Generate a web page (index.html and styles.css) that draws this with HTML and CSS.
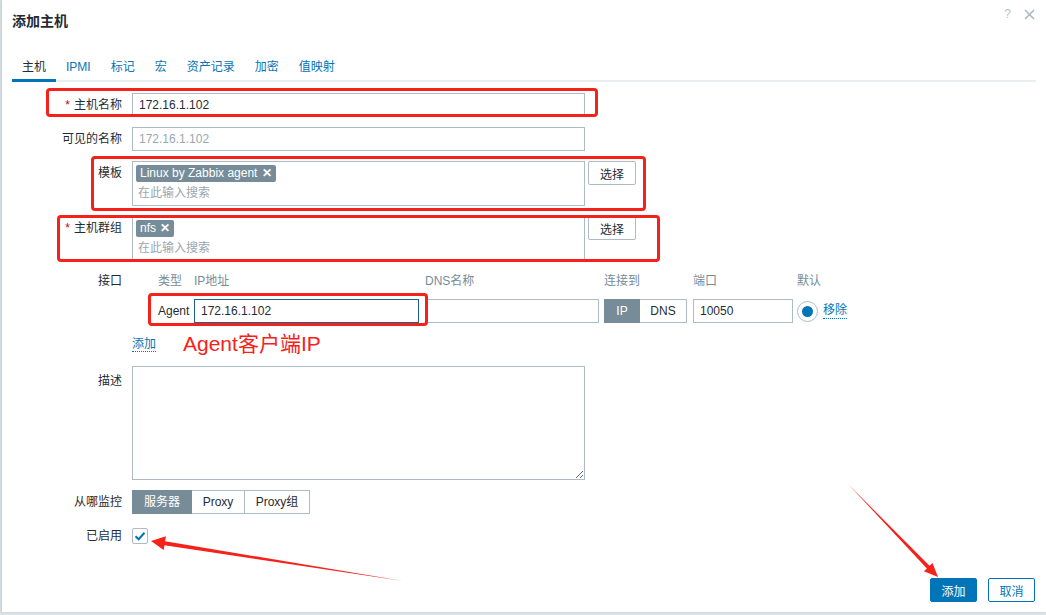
FILE: index.html
```html
<!DOCTYPE html>
<html>
<head>
    <meta charset="utf-8">
    <title>添加主机</title>
    <link rel="stylesheet" href="styles.css">
</head>
<body>
    <div class="dialog">
        <div class="dialog-head">
            <h4 class="dialog-title">添加主机</h4>
            <div class="head-icons">
                <span class="help">?</span>
                <svg class="close" width="11" height="11" viewBox="0 0 11 11"><path d="M1 1L10 10M10 1L1 10" stroke="#a9b8c3" stroke-width="1.6"/></svg>
            </div>
        </div>

        <ul class="tabs">
            <li class="active">主机</li>
            <li>IPMI</li>
            <li>标记</li>
            <li>宏</li>
            <li>资产记录</li>
            <li>加密</li>
            <li>值映射</li>
        </ul>

        <div class="form">
            <label class="lbl req">主机名称</label>
            <div class="field"><input class="text wide" type="text" value="172.16.1.102"></div>

            <label class="lbl">可见的名称</label>
            <div class="field"><input class="text wide" type="text" placeholder="172.16.1.102"></div>

            <label class="lbl">模板</label>
            <div class="field">
                <div class="ms">
                    <span class="tag">Linux by Zabbix agent <b>✕</b></span>
                    <div class="ms-hint">在此输入搜索</div>
                </div>
                <button class="btn pick">选择</button>
            </div>

            <label class="lbl req">主机群组</label>
            <div class="field">
                <div class="ms">
                    <span class="tag">nfs <b>✕</b></span>
                    <div class="ms-hint">在此输入搜索</div>
                </div>
                <button class="btn pick">选择</button>
            </div>

            <label class="lbl short">接口</label>
            <div class="iface">
                <div class="iface-grid head">
                    <span>类型</span>
                    <span>IP地址</span>
                    <span>DNS名称</span>
                    <span>连接到</span>
                    <span>端口</span>
                    <span>默认</span>
                </div>
                <div class="iface-grid data">
                    <span class="type">Agent</span>
                    <span><input class="text ip focus" type="text" value="172.16.1.102"></span>
                    <span><input class="text dns" type="text"></span>
                    <span class="seg">
                        <span class="seg-btn on">IP</span><span class="seg-btn">DNS</span>
                    </span>
                    <span><input class="text port" type="text" value="10050"></span>
                    <span class="def">
                        <span class="radio"><span class="dot"></span></span>
                        <a class="link">移除</a>
                    </span>
                </div>
                <div class="iface-add"><a class="link">添加</a></div>
            </div>

            <label class="lbl low">描述</label>
            <div class="field"><textarea class="area"></textarea></div>

            <label class="lbl">从哪监控</label>
            <div class="field">
                <span class="seg mon">
                    <span class="seg-btn on w1">服务器</span><span class="seg-btn w2">Proxy</span><span class="seg-btn w3">Proxy组</span>
                </span>
            </div>

            <label class="lbl">已启用</label>
            <div class="field">
                <span class="check">
                    <svg width="12" height="10" viewBox="0 0 12 10"><path d="M1.5 5.2L4.6 8.2L10.5 1.8" fill="none" stroke="#0275b8" stroke-width="2"/></svg>
                </span>
            </div>
        </div>

        <div class="dialog-foot">
            <button class="btn primary">添加</button>
            <button class="btn alt">取消</button>
        </div>
    </div>

    <!-- annotations drawn on top of the screenshot -->
    <div class="redbox box-name"></div>
    <div class="redbox box-tpl"></div>
    <div class="redbox box-grp"></div>
    <div class="redbox box-ip"></div>
    <div class="note">Agent客户端IP</div>
    <svg class="arrows" width="1046" height="615" viewBox="0 0 1046 615">
        <polygon fill="#f4221b" points="403,581 164.5,545.2 163.7,550.1 151,541 165.9,536.3 165.1,541.2"/>
        <polygon fill="#f4221b" points="848,484 929.5,565.8 932.5,562.9 938,577 923.9,571.3 926.9,568.4"/>
    </svg>
</body>
</html>
```

FILE: styles.css
```css
body { margin: 0; background: #dde3e6; font-family: "Liberation Sans", Arial, "Noto Sans CJK SC", sans-serif; font-size: 12px; color: #1f2c33; position: relative; width: 1046px; height: 615px; overflow: hidden; }
.dialog { margin-left: 2px; width: 1044px; height: 612px; background: #fff; display: flex; flex-direction: column; box-shadow: -1px 0 2px rgba(0,0,0,0.12); }

.dialog-head { height: 40px; padding: 0 10px; display: flex; align-items: center; justify-content: space-between; }
.dialog-title { margin: 0; font-size: 14px; font-weight: bold; color: #1f2c33; }
.head-icons { align-self: flex-start; margin-top: 7px; display: flex; align-items: center; gap: 13px; margin-right: 1px; }
.help { color: #b7c2ca; font-size: 12px; }

.tabs { list-style: none; margin: 0 10px; padding: 0; display: flex; border-bottom: 2px solid #ebeef0; }
.tabs li { padding: 19px 10px 4px; line-height: 16px; color: #0275b8; border-bottom: 3px solid transparent; margin-bottom: -2px; }
.tabs li.active { color: #1f2c33; border-bottom-color: #0275b8; }

.form { display: grid; grid-template-columns: 110px 1fr; column-gap: 10px; row-gap: 10px; padding: 11px 10px 0; }
.lbl { text-align: right; line-height: 24px; }
.lbl.short { line-height: 18px; padding-top: 1px; }
.lbl.low { padding-top: 3px; }
.req::before { content: "*"; color: #d40000; margin-right: 4px; }
.field { display: flex; align-items: flex-start; }

.text { box-sizing: border-box; height: 24px; border: 1px solid #acbbc7; padding: 0 6px; font: inherit; color: #1f2c33; background: #fff; outline: none; margin: 0; }
.text::placeholder { color: #9aa7b0; }
.wide { width: 453px; }
.focus { border-color: #1c5f90; }

.ms { box-sizing: border-box; width: 453px; height: 45px; border: 1px solid #acbbc7; padding: 3px 3px 2px; }
.tag { display: inline-block; background: #768d99; color: #fff; line-height: 17px; padding: 0 4px; border-radius: 2px; }
.tag b { font-weight: bold; font-size: 12px; margin-left: 1px; }
.ms-hint { color: #9aa7b0; line-height: 18px; margin-top: 2px; padding-left: 2px; }

.btn { box-sizing: border-box; height: 24px; border: 1px solid #acbbc7; background: #fff; border-radius: 2px; font: inherit; color: #1f2c33; padding: 0; cursor: pointer; }
.pick { width: 48px; margin-left: 3px; }

.iface { padding-left: 26px; }
.iface-grid { display: grid; grid-template-columns: 36px 231px 179px 89px 104px auto; }
.iface-grid.head { line-height: 18px; color: #768d99; padding-top: 1px; }
.iface-grid.data { margin-top: 9px; line-height: 24px; }
.ip { width: 225px; }
.dns { width: 174px; }
.port { width: 100px; }
.seg { display: inline-flex; }
.seg-btn { box-sizing: border-box; height: 24px; line-height: 22px; border: 1px solid #acbbc7; text-align: center; background: #fff; color: #1f2c33; }
.seg-btn + .seg-btn { border-left: none; }
.seg-btn.on { background: #768d99; border-color: #768d99; color: #fff; }
.data .seg-btn { width: 36px; }
.data .seg-btn + .seg-btn { width: 47px; }
.def { display: flex; align-items: center; gap: 5px; }
.radio { box-sizing: border-box; width: 21px; height: 21px; border: 1px solid #acbbc7; border-radius: 50%; display: flex; align-items: center; justify-content: center; }
.dot { width: 11px; height: 11px; background: #0275b8; border-radius: 50%; }
.link { color: #0275b8; border-bottom: 1px dotted #0275b8; line-height: 15px; }
.iface-add { margin: 12px 0 0 -26px; line-height: 18px; padding-bottom: 3px; }

.area { box-sizing: border-box; width: 453px; height: 114px; border: 1px solid #acbbc7; margin: 0; resize: vertical; font: inherit; }

.mon .w1 { width: 60px; }
.mon .w2 { width: 53px; }
.mon .w3 { width: 65px; }
.check { box-sizing: border-box; margin-top: 4px; width: 16px; height: 16px; border: 1px solid #acbbc7; border-radius: 2px; display: flex; align-items: center; justify-content: center; }

.dialog-foot { margin-top: auto; display: flex; justify-content: flex-end; gap: 11px; padding: 0 11px 10px 0; }
.primary { width: 47px; background: #0275b8; border-color: #0275b8; color: #fff; }
.alt { width: 47px; border-color: #0275b8; color: #0275b8; }

/* red annotations */
.redbox { position: absolute; box-sizing: border-box; border: 3px solid #f4221b; border-radius: 4px; }
.box-name { left: 46px; top: 88px; width: 552px; height: 29px; }
.box-tpl { left: 91px; top: 156px; width: 555px; height: 55px; }
.box-grp { left: 57px; top: 215px; width: 603px; height: 47px; }
.box-ip { left: 148px; top: 293px; width: 280px; height: 33px; }
.note { position: absolute; left: 183px; top: 330px; font-size: 21px; line-height: 28px; color: #f4221b; }
.arrows { position: absolute; left: 0; top: 0; }
```
